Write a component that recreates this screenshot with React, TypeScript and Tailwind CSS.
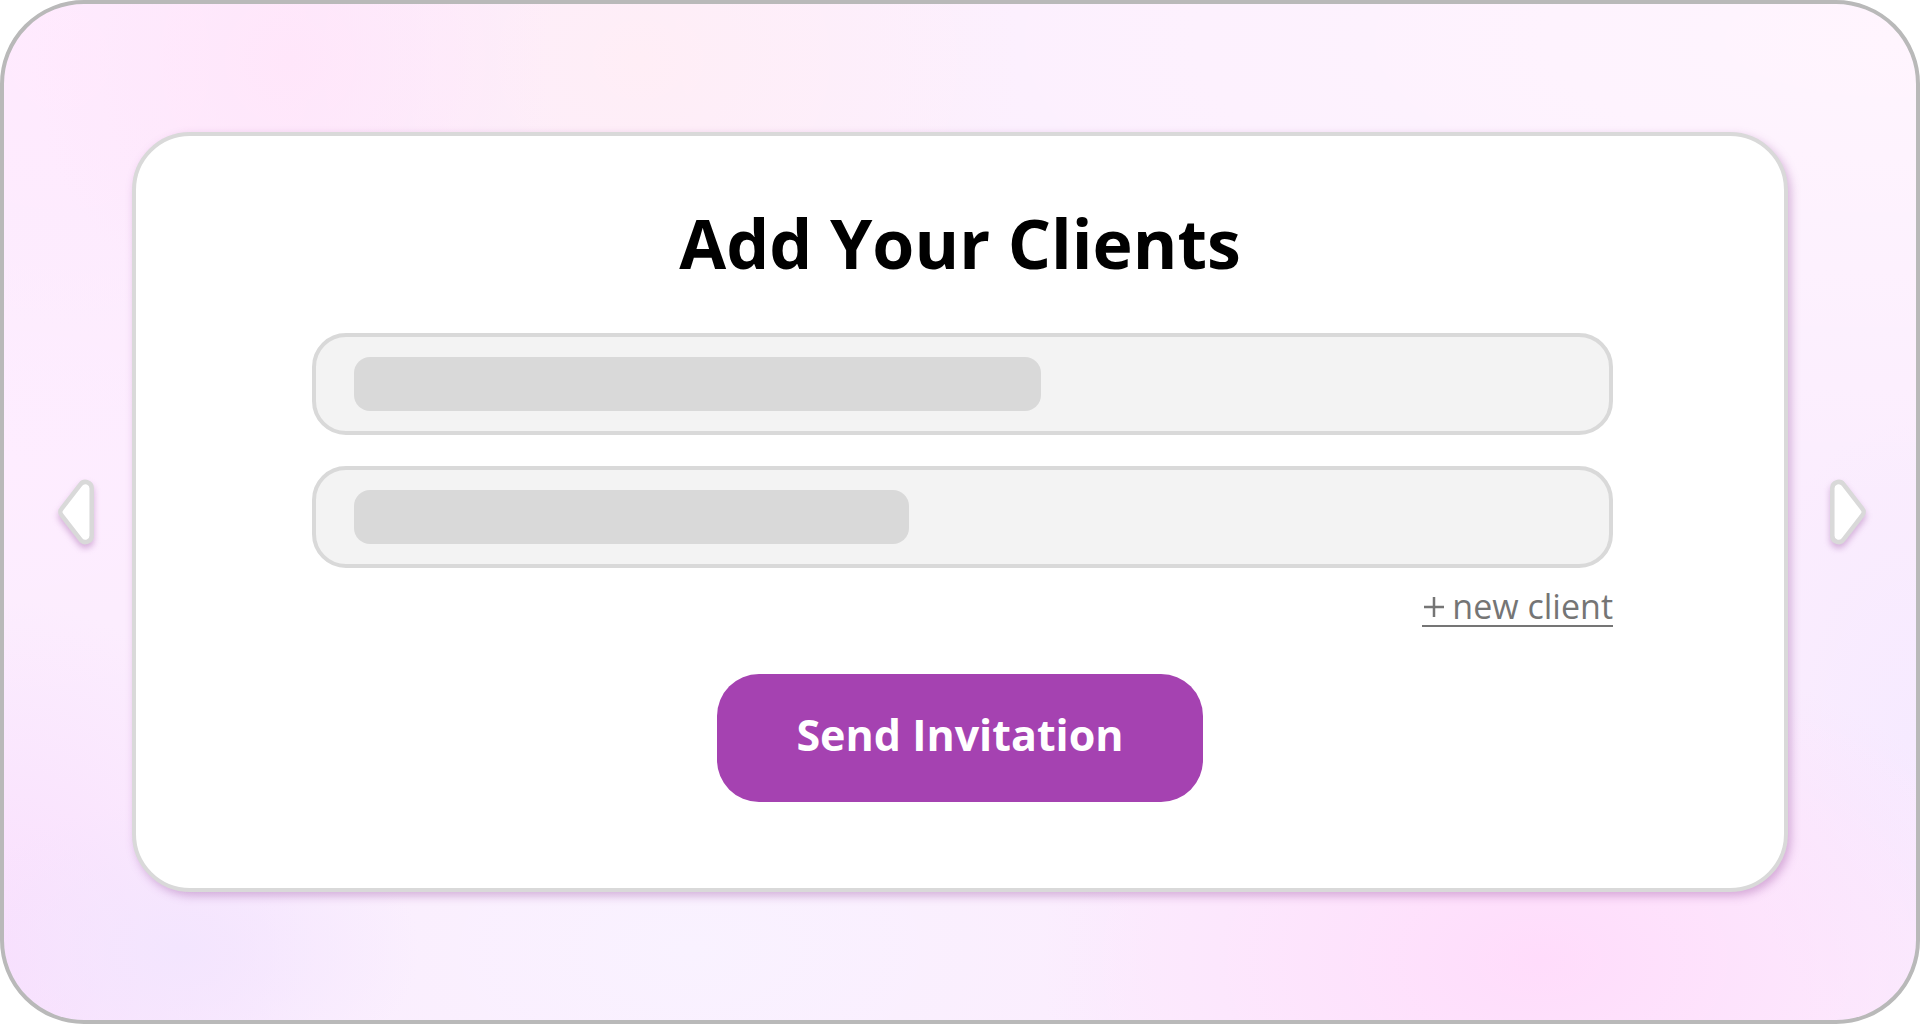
const fields = [
  { id: 'client-1', label: 'First client', bar: 'w-[687px]' },
  { id: 'client-2', label: 'Second client', bar: 'w-[555px]' },
];

function Arrow({ flip }: { flip?: boolean }) {
  return (
    <svg
      viewBox="0 0 36 64"
      className="h-16 w-9 overflow-visible drop-shadow-[0_4px_3px_rgba(140,60,150,0.35)]"
      aria-hidden="true"
    >
      <path
        d="M22.5 4.3 L3.5 28.9 A4.7 4.7 0 0 0 3.5 35.1 L22.5 59.7 A6.3 6.3 0 0 0 33.7 55.5 V8.5 A6.3 6.3 0 0 0 22.5 4.3 Z"
        transform={flip ? 'translate(36 0) scale(-1 1)' : undefined}
        fill="#ffffff"
        stroke="#d9d9d9"
        strokeWidth="4.5"
        strokeLinejoin="round"
      />
    </svg>
  );
}

export default function App() {
  return (
    <main
      className="flex min-h-screen items-center rounded-[84px] border-4 border-[#b9b9b9] bg-[#fbedfe] bg-[radial-gradient(ellipse_260px_260px_at_290px_60px,#ffe6fa,transparent),radial-gradient(ellipse_380px_320px_at_640px_60px,#ffeef6,transparent),radial-gradient(ellipse_500px_320px_at_1540px_960px,#ffdcfb,transparent),radial-gradient(ellipse_240px_150px_at_180px_950px,#f3e5fe,transparent),radial-gradient(ellipse_300px_360px_at_0px_960px,#f9defd,transparent),radial-gradient(ellipse_460px_260px_at_690px_950px,#f9f2ff,transparent),radial-gradient(ellipse_180px_320px_at_1910px_740px,#f6eaff,transparent),radial-gradient(ellipse_1400px_460px_at_1900px_40px,#fff5fe,transparent),radial-gradient(ellipse_400px_260px_at_0px_460px,#feedff,transparent),radial-gradient(ellipse_400px_400px_at_60px_60px,#ffeafe,transparent)] bg-origin-border font-['Open_Sans',sans-serif]"
    >
      <div className="flex w-32 shrink-0 justify-end pr-[38px]">
        <button type="button" aria-label="Previous" className="cursor-pointer">
          <Arrow />
        </button>
      </div>

      <form
        onSubmit={(e) => e.preventDefault()}
        className="flex min-w-0 flex-1 flex-col rounded-[58px] border-4 border-[#d9d9d9] bg-white pt-[61px] pb-[86px] shadow-[3px_4px_10px_rgba(140,60,150,0.35)]"
      >
        <h1 className="text-center text-[68px] leading-[92px] font-bold text-black">Add Your Clients</h1>

        <div className="mt-11 flex flex-col pr-[171px] pl-44">
          <div className="flex flex-col gap-[31px]">
            {fields.map((field) => (
              <label key={field.id} htmlFor={field.id} className="relative block">
                <input
                  id={field.id}
                  type="text"
                  aria-label={field.label}
                  className="block h-[102px] w-full rounded-[34px] border-4 border-[#d9d9d9] bg-[#f3f3f3] px-10 text-3xl outline-none"
                />
                <span
                  className={`pointer-events-none absolute top-6 left-[42px] h-[54px] rounded-2xl bg-[#d9d9d9] ${field.bar}`}
                />
              </label>
            ))}
          </div>

          <a
            href="#new-client"
            className="mt-5 flex h-[39px] items-center gap-1.5 self-end border-b-2 border-[#757575] text-[34px] leading-[37px] text-[#757575]"
          >
            <svg viewBox="0 0 24 24" className="size-6" fill="none" stroke="currentColor" strokeWidth="2.5" aria-hidden="true">
              <path d="M2 12H22M12 2V22" />
            </svg>
            new client
          </a>
        </div>

        <button
          type="submit"
          className="mt-[47px] h-32 w-[486px] cursor-pointer self-center rounded-[42px] bg-[#a542b1] pb-1.5 text-[43px] leading-[60px] font-bold text-white"
        >
          Send Invitation
        </button>
      </form>

      <div className="flex w-32 shrink-0 justify-start pl-[42px]">
        <button type="button" aria-label="Next" className="cursor-pointer">
          <Arrow flip />
        </button>
      </div>
    </main>
  );
}
